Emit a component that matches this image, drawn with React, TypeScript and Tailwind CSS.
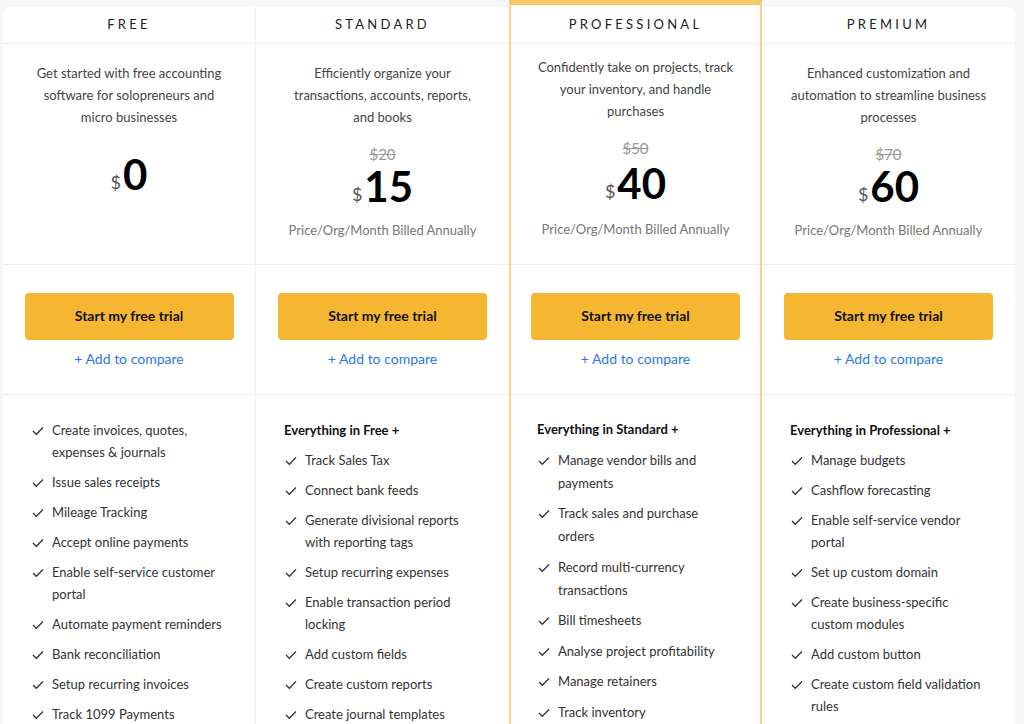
import React from "react";

type Plan = {
  name: string;
  desc: string[];
  old?: string;
  price: string;
  heading?: string;
  features: string[][];
  featured?: boolean;
};

const plans: Plan[] = [
  {
    name: "FREE",
    desc: ["Get started with free accounting", "software for solopreneurs and", "micro businesses"],
    price: "0",
    features: [
      ["Create invoices, quotes,", "expenses & journals"],
      ["Issue sales receipts"],
      ["Mileage Tracking"],
      ["Accept online payments"],
      ["Enable self-service customer", "portal"],
      ["Automate payment reminders"],
      ["Bank reconciliation"],
      ["Setup recurring invoices"],
      ["Track 1099 Payments"],
    ],
  },
  {
    name: "STANDARD",
    desc: ["Efficiently organize your", "transactions, accounts, reports,", "and books"],
    old: "$20",
    price: "15",
    heading: "Everything in Free +",
    features: [
      ["Track Sales Tax"],
      ["Connect bank feeds"],
      ["Generate divisional reports", "with reporting tags"],
      ["Setup recurring expenses"],
      ["Enable transaction period", "locking"],
      ["Add custom fields"],
      ["Create custom reports"],
      ["Create journal templates"],
    ],
  },
  {
    name: "PROFESSIONAL",
    desc: ["Confidently take on projects, track", "your inventory, and handle", "purchases"],
    old: "$50",
    price: "40",
    heading: "Everything in Standard +",
    featured: true,
    features: [
      ["Manage vendor bills and", "payments"],
      ["Track sales and purchase", "orders"],
      ["Record multi-currency", "transactions"],
      ["Bill timesheets"],
      ["Analyse project profitability"],
      ["Manage retainers"],
      ["Track inventory"],
    ],
  },
  {
    name: "PREMIUM",
    desc: ["Enhanced customization and", "automation to streamline business", "processes"],
    old: "$70",
    price: "60",
    heading: "Everything in Professional +",
    features: [
      ["Manage budgets"],
      ["Cashflow forecasting"],
      ["Enable self-service vendor", "portal"],
      ["Set up custom domain"],
      ["Create business-specific", "custom modules"],
      ["Add custom button"],
      ["Create custom field validation", "rules"],
    ],
  },
];

function Check() {
  return (
    <svg width="12" height="10" viewBox="0 0 12 10" className="mt-[7px] shrink-0">
      <polyline points="1,5 4.3,8.3 11,1.5" fill="none" stroke="#333" strokeWidth="1.3" />
    </svg>
  );
}

function Price({ value }: { value: string }) {
  return (
    <div className="flex items-end leading-[44px]">
      <span className="mb-[2px] mr-[2px] text-[18px] leading-[24px] text-[#555]">$</span>
      <span className="text-[42px] font-bold text-black">{value}</span>
    </div>
  );
}

function Column({ plan, index }: { plan: Plan; index: number }) {
  const featured = plan.featured;
  const lh = featured ? "leading-[23px]" : "leading-[22px]";
  return (
    <div
      className={
        featured
          ? "-mt-[7px] flex w-[253px] flex-col border-x-2 border-t-[5px] border-x-[#f4d48f] border-t-[#f6c866] bg-white"
          : index === 3
            ? "flex w-[253px] flex-col rounded-tr-lg bg-white"
            : index === 0
              ? "flex w-[253px] flex-col rounded-tl-lg border-r border-[#eceef2] bg-white"
              : "flex w-[253px] flex-col bg-white"
      }
    >
      <div
        className={
          "flex items-center justify-center border-b border-[#eceef2] text-[13px] tracking-[0.25em] text-[#222] " +
          (featured ? "h-[39px] pt-[2px]" : "h-[37px]")
        }
      >
        {plan.name}
      </div>

      <div
        className={
          "flex h-[221px] flex-col items-center border-b border-[#eceef2] text-center " +
          (featured ? "pt-[12px]" : "pt-[18px]")
        }
      >
        <div className="text-[13px] leading-[22px] text-[#444]">
          {plan.desc.map((d) => (
            <div key={d}>{d}</div>
          ))}
        </div>
        {plan.old ? (
          <>
            <div className="mt-[16px] text-[15px] leading-[20px] text-[#999] line-through">{plan.old}</div>
            <div className={featured ? "mt-[3px]" : ""}>
              <Price value={plan.price} />
            </div>
            <div
              className={
                "text-[13px] leading-[22px] text-[#777] " + (featured ? "mt-[13px]" : "mt-[11px]")
              }
            >
              Price/Org/Month Billed Annually
            </div>
          </>
        ) : (
          <div className="mt-[24px]">
            <Price value={plan.price} />
          </div>
        )}
      </div>

      <div className="flex h-[130px] flex-col items-center border-b border-[#eceef2] pt-[28px]">
        <button className="h-[47px] w-[209px] rounded bg-[#f5b731] pb-[2px] text-[14px] font-bold text-[#111]">
          Start my free trial
        </button>
        <div className="mt-[9px] text-[14px] leading-[20px] text-[#2a7ae2]">+ Add to compare</div>
      </div>

      <div
        className={
          "flex flex-1 flex-col pb-8 " +
          (featured ? "gap-[7.5px] pl-[26px] pt-[23px]" : "gap-[8px] pl-[28px] pt-[24px]")
        }
      >
        {plan.heading && (
          <div className={"text-[13px] font-bold text-[#111] " + lh}>{plan.heading}</div>
        )}
        {plan.features.map((f) => (
          <div key={f[0]} className="flex gap-[8px] pl-[1px]">
            <Check />
            <div className={"text-[13px] text-[#333] " + lh}>
              {f.map((l) => (
                <div key={l}>{l}</div>
              ))}
            </div>
          </div>
        ))}
      </div>
    </div>
  );
}

export default function App() {
  return (
    <div className="min-h-screen overflow-hidden bg-[#f6f7f9] pl-[3px] pt-[7px] font-['Lato','Liberation_Sans',sans-serif]">
      <div className="flex">
        {plans.map((p, i) => (
          <Column key={p.name} plan={p} index={i} />
        ))}
      </div>
    </div>
  );
}
